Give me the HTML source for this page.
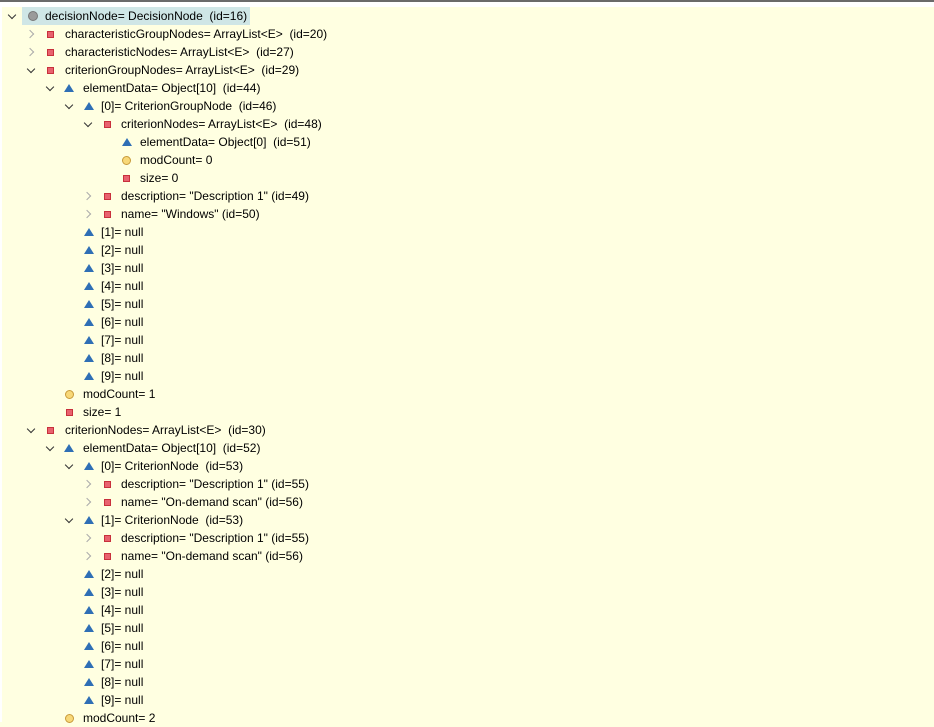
<!DOCTYPE html>
<html><head><meta charset="utf-8"><style>
html,body{margin:0;padding:0}
body{width:934px;height:722px;background:#ffffe1;position:relative;overflow:hidden;font-family:"Liberation Sans",sans-serif;font-size:12px;color:#000}
.topbar{position:absolute;left:0;top:0;width:934px;height:2px;background:#6a6a6a}
.topw{position:absolute;left:0;top:2px;width:934px;height:5px;background:#fff}
.leftw{position:absolute;left:0;top:0;width:2px;height:722px;background:#fff}
.r{position:absolute;height:18px;line-height:18px;white-space:pre}
.t{position:absolute;top:0}
.ch{position:absolute;top:5px;width:5px;height:5px;border-right:1.6px solid #333;border-bottom:1.6px solid #333;transform:rotate(45deg)}
.cc{position:absolute;top:6px;width:5px;height:5px;border-right:1.6px solid #aaa;border-bottom:1.6px solid #aaa;transform:rotate(-45deg)}
.sq{position:absolute;top:6px;width:5px;height:5px;background:#e8626e;border:1px solid #c8303c}
.tr{position:absolute;top:5px;width:0;height:0;border-left:5px solid transparent;border-right:5px solid transparent;border-bottom:8px solid #2f6fb5}
.ci{position:absolute;top:5px;width:7px;height:7px;border-radius:50%;background:#f8d878;border:1px solid #c89a3a}
.hl{position:absolute;left:22px;top:7px;width:228px;height:18px;background:#cfe6e6}
.gc{position:absolute;left:28px;top:11px;width:8px;height:8px;border-radius:50%;background:#9a9a9a;border:1px solid #777}
</style></head><body>
<div class="leftw"></div><div class="topw"></div><div class="topbar"></div>
<div class="hl"></div>
<div class="r" style="top:7px;left:0;width:400px"><div class="ch" style="left:9px"></div><div class="gc" style="top:4px"></div><span class="t" style="left:45px">decisionNode= DecisionNode  (id=16)</span></div>

<div class="r" style="top:25px;left:0;width:600px"><div class="cc" style="left:27px"></div><div class="sq" style="left:47px"></div><span class="t" style="left:65px">characteristicGroupNodes= ArrayList&lt;E&gt;  (id=20)</span></div>
<div class="r" style="top:43px;left:0;width:600px"><div class="cc" style="left:27px"></div><div class="sq" style="left:47px"></div><span class="t" style="left:65px">characteristicNodes= ArrayList&lt;E&gt;  (id=27)</span></div>
<div class="r" style="top:61px;left:0;width:600px"><div class="ch" style="left:28px"></div><div class="sq" style="left:47px"></div><span class="t" style="left:65px">criterionGroupNodes= ArrayList&lt;E&gt;  (id=29)</span></div>
<div class="r" style="top:79px;left:0;width:600px"><div class="ch" style="left:47px"></div><div class="tr" style="left:64px"></div><span class="t" style="left:83px">elementData= Object[10]  (id=44)</span></div>
<div class="r" style="top:97px;left:0;width:600px"><div class="ch" style="left:66px"></div><div class="tr" style="left:84px"></div><span class="t" style="left:101px">[0]= CriterionGroupNode  (id=46)</span></div>
<div class="r" style="top:115px;left:0;width:600px"><div class="ch" style="left:85px"></div><div class="sq" style="left:104px"></div><span class="t" style="left:121px">criterionNodes= ArrayList&lt;E&gt;  (id=48)</span></div>
<div class="r" style="top:133px;left:0;width:600px"><div class="tr" style="left:122px"></div><span class="t" style="left:140px">elementData= Object[0]  (id=51)</span></div>
<div class="r" style="top:151px;left:0;width:600px"><div class="ci" style="left:122px"></div><span class="t" style="left:140px">modCount= 0</span></div>
<div class="r" style="top:169px;left:0;width:600px"><div class="sq" style="left:123px"></div><span class="t" style="left:140px">size= 0</span></div>
<div class="r" style="top:187px;left:0;width:600px"><div class="cc" style="left:84px"></div><div class="sq" style="left:104px"></div><span class="t" style="left:121px">description= "Description 1" (id=49)</span></div>
<div class="r" style="top:205px;left:0;width:600px"><div class="cc" style="left:84px"></div><div class="sq" style="left:104px"></div><span class="t" style="left:121px">name= "Windows" (id=50)</span></div>
<div class="r" style="top:223px;left:0;width:600px"><div class="tr" style="left:84px"></div><span class="t" style="left:101px">[1]= null</span></div>
<div class="r" style="top:241px;left:0;width:600px"><div class="tr" style="left:84px"></div><span class="t" style="left:101px">[2]= null</span></div>
<div class="r" style="top:259px;left:0;width:600px"><div class="tr" style="left:84px"></div><span class="t" style="left:101px">[3]= null</span></div>
<div class="r" style="top:277px;left:0;width:600px"><div class="tr" style="left:84px"></div><span class="t" style="left:101px">[4]= null</span></div>
<div class="r" style="top:295px;left:0;width:600px"><div class="tr" style="left:84px"></div><span class="t" style="left:101px">[5]= null</span></div>
<div class="r" style="top:313px;left:0;width:600px"><div class="tr" style="left:84px"></div><span class="t" style="left:101px">[6]= null</span></div>
<div class="r" style="top:331px;left:0;width:600px"><div class="tr" style="left:84px"></div><span class="t" style="left:101px">[7]= null</span></div>
<div class="r" style="top:349px;left:0;width:600px"><div class="tr" style="left:84px"></div><span class="t" style="left:101px">[8]= null</span></div>
<div class="r" style="top:367px;left:0;width:600px"><div class="tr" style="left:84px"></div><span class="t" style="left:101px">[9]= null</span></div>
<div class="r" style="top:385px;left:0;width:600px"><div class="ci" style="left:65px"></div><span class="t" style="left:83px">modCount= 1</span></div>
<div class="r" style="top:403px;left:0;width:600px"><div class="sq" style="left:66px"></div><span class="t" style="left:83px">size= 1</span></div>
<div class="r" style="top:421px;left:0;width:600px"><div class="ch" style="left:28px"></div><div class="sq" style="left:47px"></div><span class="t" style="left:65px">criterionNodes= ArrayList&lt;E&gt;  (id=30)</span></div>
<div class="r" style="top:439px;left:0;width:600px"><div class="ch" style="left:47px"></div><div class="tr" style="left:64px"></div><span class="t" style="left:83px">elementData= Object[10]  (id=52)</span></div>
<div class="r" style="top:457px;left:0;width:600px"><div class="ch" style="left:66px"></div><div class="tr" style="left:84px"></div><span class="t" style="left:101px">[0]= CriterionNode  (id=53)</span></div>
<div class="r" style="top:475px;left:0;width:600px"><div class="cc" style="left:84px"></div><div class="sq" style="left:104px"></div><span class="t" style="left:121px">description= "Description 1" (id=55)</span></div>
<div class="r" style="top:493px;left:0;width:600px"><div class="cc" style="left:84px"></div><div class="sq" style="left:104px"></div><span class="t" style="left:121px">name= "On-demand scan" (id=56)</span></div>
<div class="r" style="top:511px;left:0;width:600px"><div class="ch" style="left:66px"></div><div class="tr" style="left:84px"></div><span class="t" style="left:101px">[1]= CriterionNode  (id=53)</span></div>
<div class="r" style="top:529px;left:0;width:600px"><div class="cc" style="left:84px"></div><div class="sq" style="left:104px"></div><span class="t" style="left:121px">description= "Description 1" (id=55)</span></div>
<div class="r" style="top:547px;left:0;width:600px"><div class="cc" style="left:84px"></div><div class="sq" style="left:104px"></div><span class="t" style="left:121px">name= "On-demand scan" (id=56)</span></div>
<div class="r" style="top:565px;left:0;width:600px"><div class="tr" style="left:84px"></div><span class="t" style="left:101px">[2]= null</span></div>
<div class="r" style="top:583px;left:0;width:600px"><div class="tr" style="left:84px"></div><span class="t" style="left:101px">[3]= null</span></div>
<div class="r" style="top:601px;left:0;width:600px"><div class="tr" style="left:84px"></div><span class="t" style="left:101px">[4]= null</span></div>
<div class="r" style="top:619px;left:0;width:600px"><div class="tr" style="left:84px"></div><span class="t" style="left:101px">[5]= null</span></div>
<div class="r" style="top:637px;left:0;width:600px"><div class="tr" style="left:84px"></div><span class="t" style="left:101px">[6]= null</span></div>
<div class="r" style="top:655px;left:0;width:600px"><div class="tr" style="left:84px"></div><span class="t" style="left:101px">[7]= null</span></div>
<div class="r" style="top:673px;left:0;width:600px"><div class="tr" style="left:84px"></div><span class="t" style="left:101px">[8]= null</span></div>
<div class="r" style="top:691px;left:0;width:600px"><div class="tr" style="left:84px"></div><span class="t" style="left:101px">[9]= null</span></div>
<div class="r" style="top:709px;left:0;width:600px"><div class="ci" style="left:65px"></div><span class="t" style="left:83px">modCount= 2</span></div>
</body></html>
